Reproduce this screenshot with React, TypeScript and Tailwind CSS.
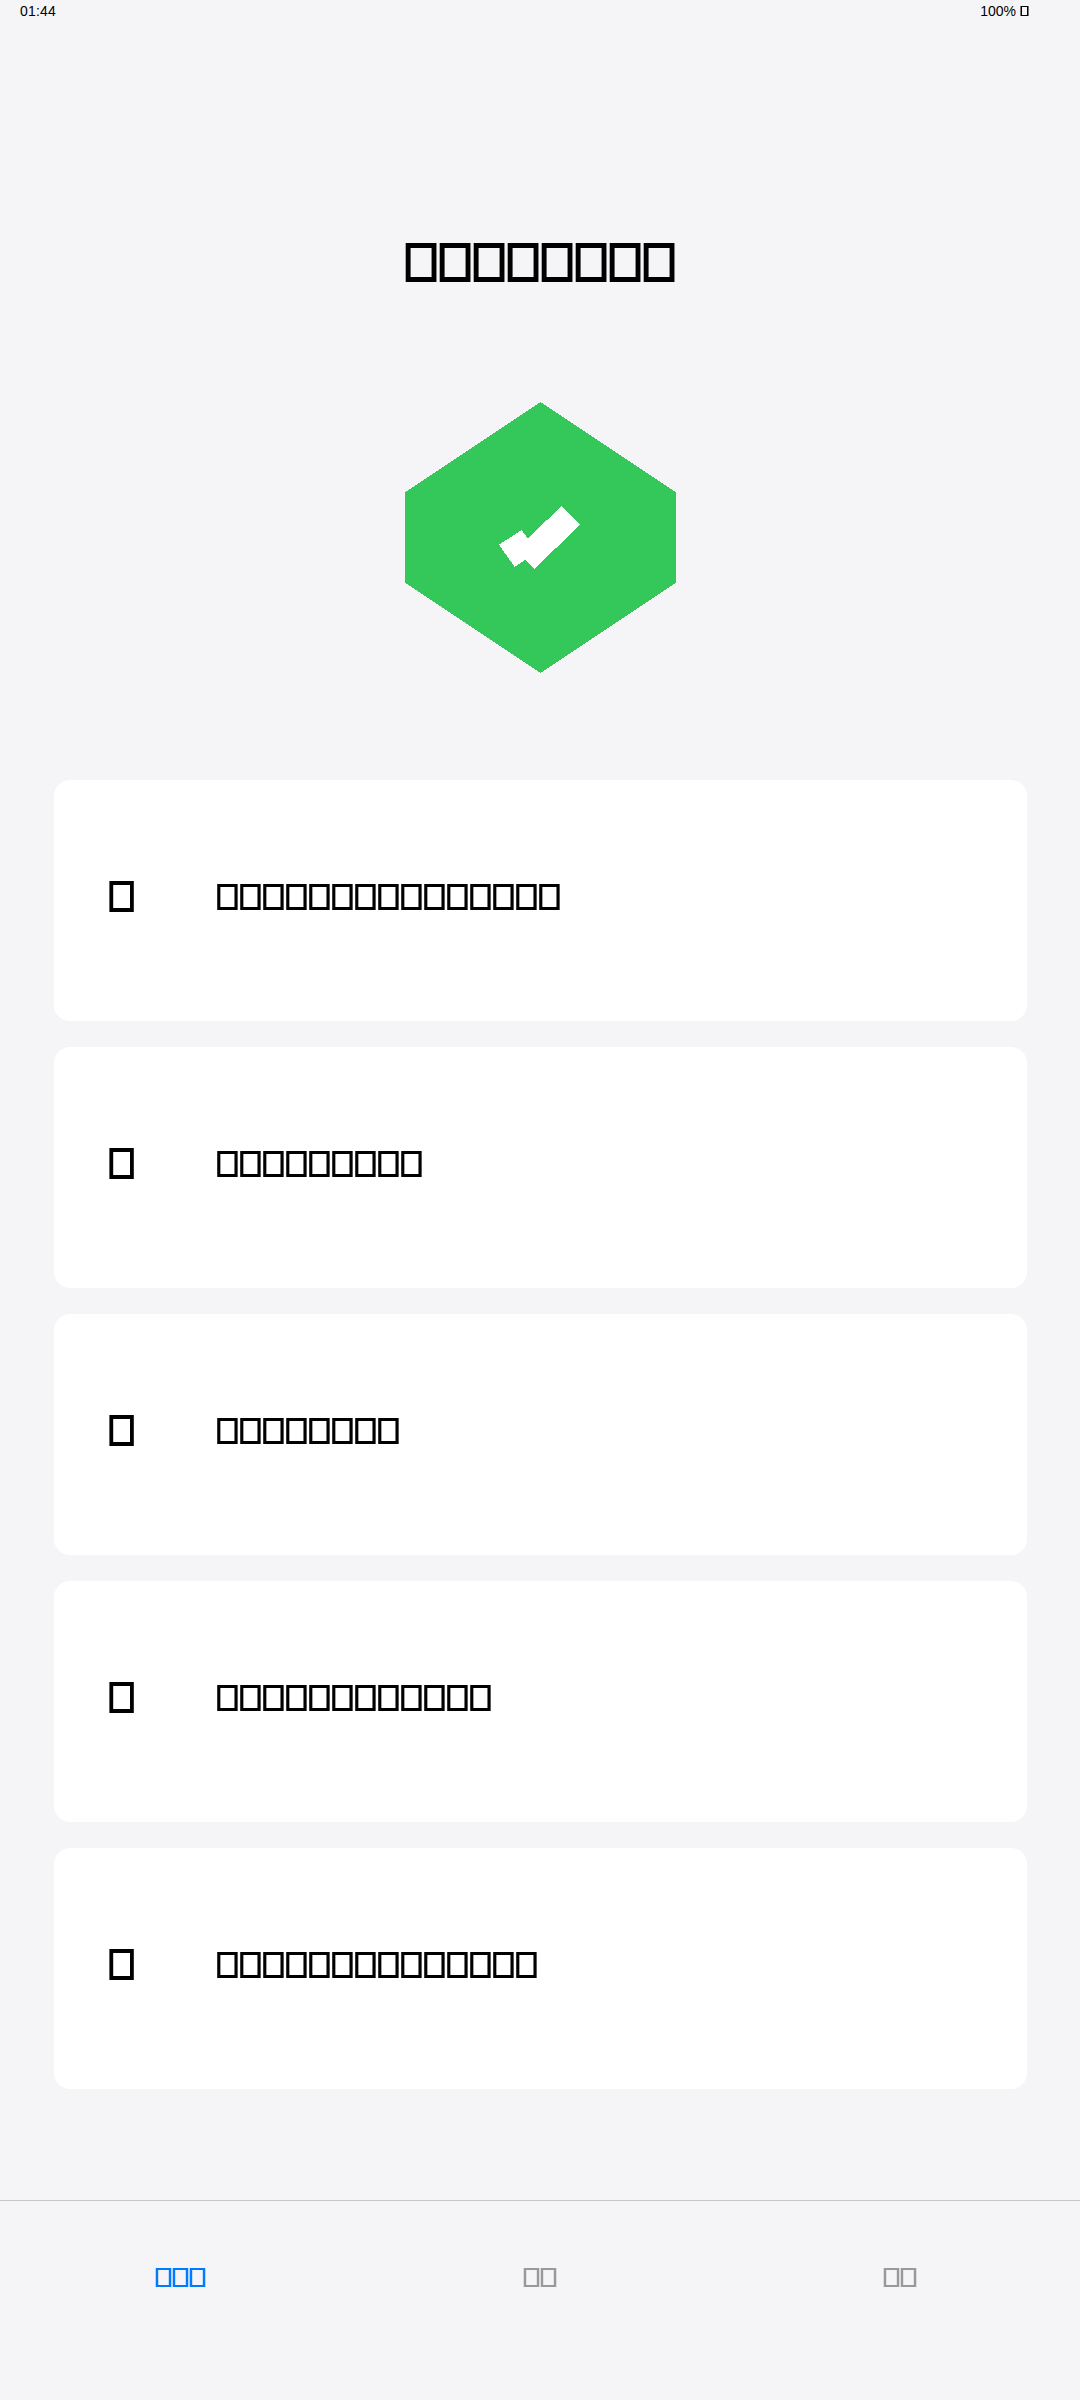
type BoxKind = 'title' | 'icon' | 'item' | 'tab' | 'tabActive' | 'status';

const boxStyles: Record<BoxKind, string> = {
  title:
    'w-[30px] h-[39px] mr-1 border-x-4 border-y-5 border-black shadow-[-1px_0_#aaaaaa,1px_0_#858585,inset_1px_0_#666666,inset_-1px_0_#8c8c8c]',
  icon: 'w-[23px] h-[31px] border-x-3 border-y-4 border-black shadow-[-1px_0_#666666,1px_0_#333333,inset_1px_0_#cccccc]',
  item: 'w-[19px] h-[26px] mr-1 border-x-2 border-y-3 border-black shadow-[-1px_0_#383838,1px_0_#5c5c5c,inset_1px_0_#a3a3a3,inset_-1px_0_#757575]',
  tab: 'w-[15px] h-[19px] mr-0.5 border-2 border-[#999999] shadow-[-1px_0_#dddddf,1px_0_#dddddf,inset_1px_0_#e2e2e4,inset_-1px_0_#e2e2e4]',
  tabActive:
    'w-[15px] h-[19px] mr-0.5 border-2 border-[#007aff] shadow-[-1px_0_#b5d5fa,1px_0_#b5d5fa,inset_1px_0_#c4dcf8,inset_-1px_0_#c4dcf8]',
  status: 'w-[7px] h-[10px] border border-black shadow-[-1px_0_#777777,1px_0_#777777]',
};

function Boxes({ kind, count }: { kind: BoxKind; count: number }) {
  return (
    <span className="flex">
      {Array.from({ length: count }, (_, i) => (
        <span key={i} className={`block shrink-0 last:mr-0 ${boxStyles[kind]}`} />
      ))}
    </span>
  );
}

const items = [15, 9, 8, 12, 14];
const tabs: { kind: BoxKind; count: number }[] = [
  { kind: 'tabActive', count: 3 },
  { kind: 'tab', count: 2 },
  { kind: 'tab', count: 2 },
];

export default function App() {
  return (
    <div className="flex h-[2400px] w-[1080px] flex-col bg-[#f5f5f7] font-['Liberation_Sans',sans-serif] text-black">
      <header className="flex h-[22px] justify-between pl-5 pr-[52px] text-[14px] leading-[22px]">
        <span className="tracking-[0.2px]">01:44</span>
        <span className="flex">
          <span>100%</span>
          <span className="ml-[5px] mt-1.5">
            <Boxes kind="status" count={1} />
          </span>
        </span>
      </header>

      <h1 className="mt-[221px] flex h-[39px] justify-center">
        <Boxes kind="title" count={8} />
      </h1>

      <svg
        className="ml-[405px] mt-[120px] block h-[271px] w-[271px] shrink-0"
        viewBox="0 0 271 271"
        shapeRendering="crispEdges"
      >
        <path d="M135.5 0 271 90.3V180.7L135.5 271 0 180.7V90.3Z" fill="#34c759" />
        <path
          d="M156.5 104 175 122.6 129.5 167 120.2 158 109.7 165 94 142.7 116.8 128 122.7 136.7Z"
          fill="#fff"
        />
      </svg>

      <main className="mx-[54px] mt-[107px] flex w-[973px] flex-col gap-[26px]">
        {items.map((count, i) => (
          <section key={i} className="flex h-[241px] items-start rounded-[16px] bg-white pl-14">
            <div className="mt-[101px] w-[108px]">
              <Boxes kind="icon" count={1} />
            </div>
            <div className="mt-[104px]">
              <Boxes kind="item" count={count} />
            </div>
          </section>
        ))}
      </main>

      <nav className="mt-auto grid h-[200px] grid-cols-3 border-t border-[#c6c6c8] pt-[67px]">
        {tabs.map((tab, i) => (
          <div key={i} className="flex justify-center">
            <Boxes kind={tab.kind} count={tab.count} />
          </div>
        ))}
      </nav>
    </div>
  );
}
